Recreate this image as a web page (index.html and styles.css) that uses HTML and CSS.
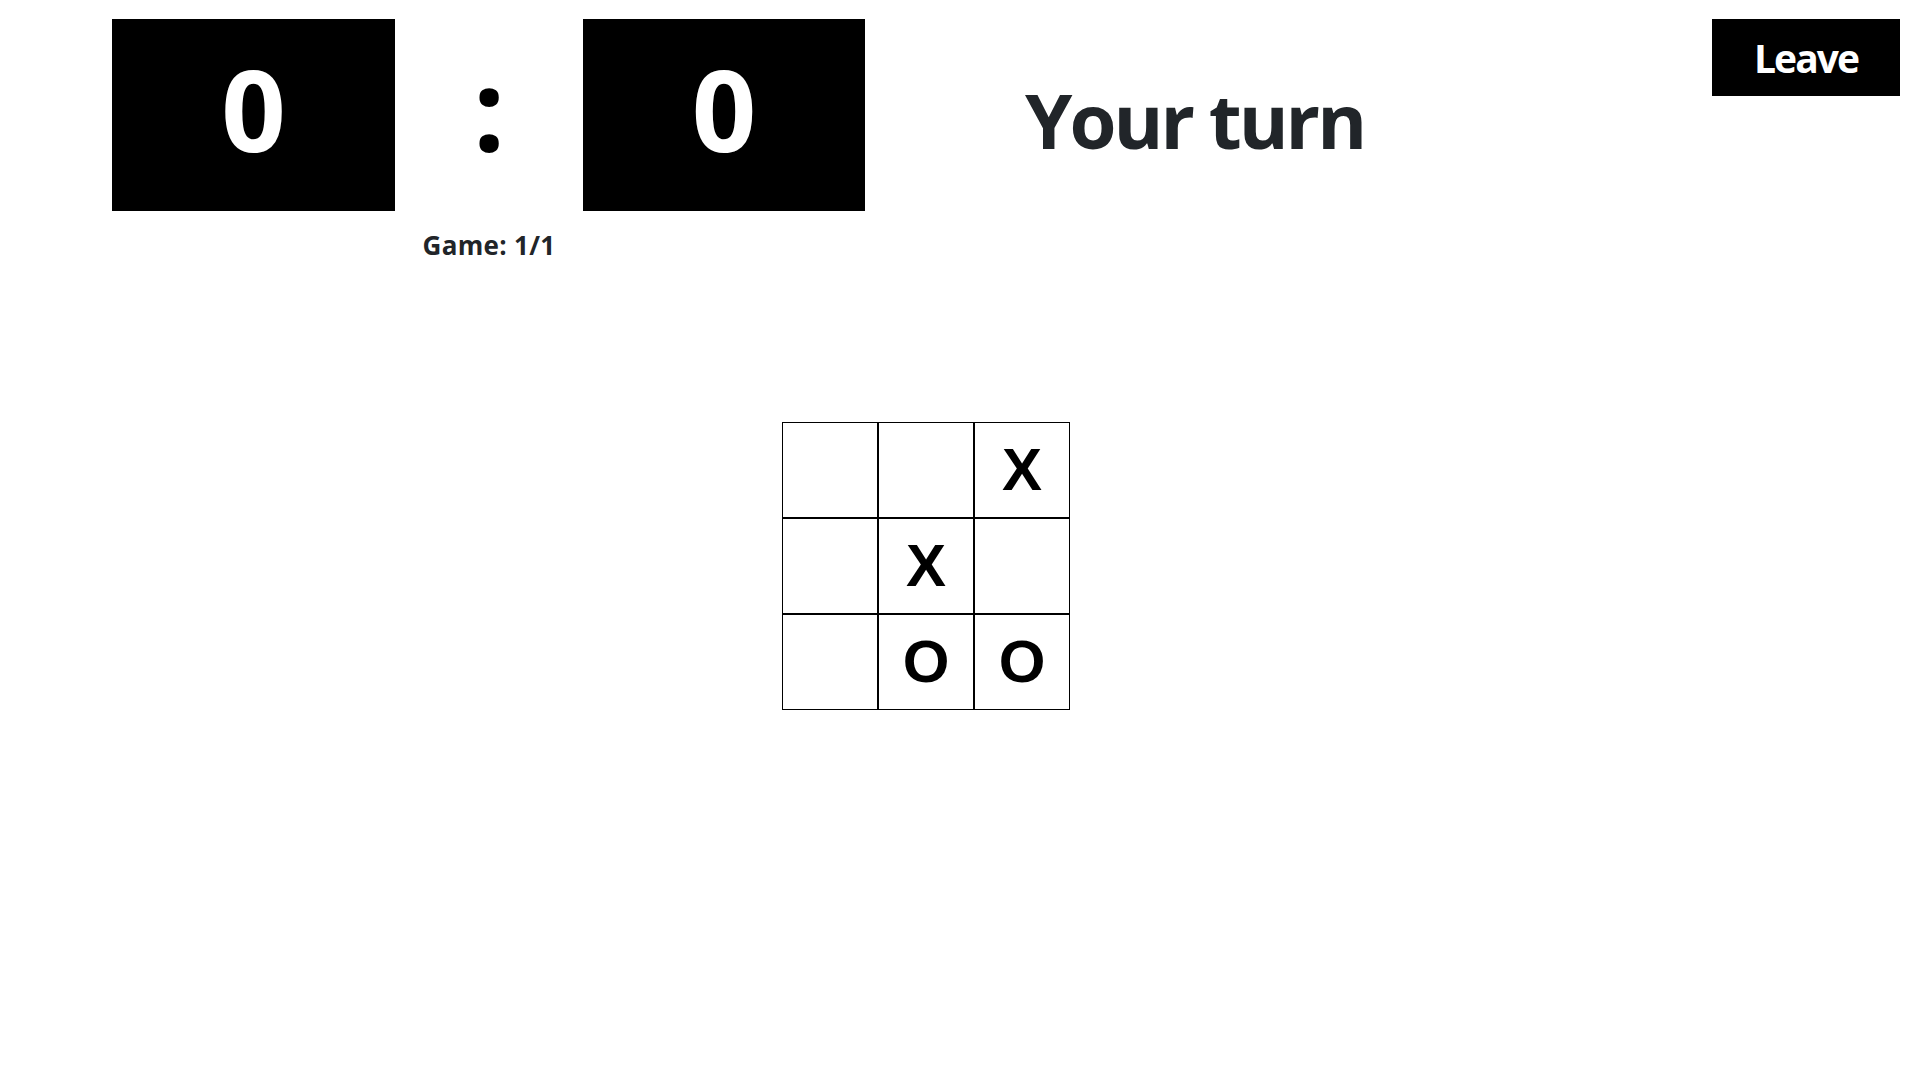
FILE: index.html
```html
<!DOCTYPE html>
<html lang="en">
<head>
<meta charset="utf-8">
<title>Tic Tac Toe</title>
<link rel="stylesheet" href="styles.css">
</head>
<body>
<header class="top">
  <div class="score">
    <div class="score-box">0</div>
    <div class="score-sep">:</div>
    <div class="score-box">0</div>
    <div class="game-count">Game: 1/1</div>
  </div>
  <h1 class="turn">Your turn</h1>
  <button class="leave" type="button">Leave</button>
</header>
<main class="board">
  <div class="cell"></div>
  <div class="cell"></div>
  <div class="cell">X</div>
  <div class="cell"></div>
  <div class="cell">X</div>
  <div class="cell"></div>
  <div class="cell"></div>
  <div class="cell">O</div>
  <div class="cell">O</div>
</main>
</body>
</html>
```
FILE: styles.css
```css
html, body {
  margin: 0;
  padding: 0;
  background: #fff;
}

body {
  font-family: "Open Sans", "Noto Sans", sans-serif;
  color: #212529;
}

.top {
  display: flex;
  align-items: flex-start;
  padding: 19px 17px 0 112px;
}

.score {
  display: grid;
  grid-template-columns: 283px 188px 282px;
  grid-template-rows: 192px auto;
}

.score-box,
.score-sep {
  display: flex;
  align-items: center;
  justify-content: center;
  font-size: 113px;
  font-weight: 700;
  line-height: 1;
  padding-bottom: 14px;
  box-sizing: border-box;
}

.score-box {
  background: #000;
  color: #fff;
}

.score-sep {
  color: #000;
}

.game-count {
  grid-column: 2;
  grid-row: 2;
  justify-self: center;
  margin-top: 19px;
  font-size: 26px;
  font-weight: 700;
  line-height: 30px;
  letter-spacing: 0.3px;
  white-space: nowrap;
}

.turn {
  margin: 63px 0 0 160px;
  font-size: 76px;
  font-weight: 700;
  line-height: 1;
  letter-spacing: -3px;
  white-space: nowrap;
}

.leave {
  margin-left: auto;
  width: 188px;
  height: 77px;
  display: flex;
  align-items: center;
  justify-content: center;
  padding: 0;
  border: none;
  background: #000;
  color: #fff;
  font-family: "Open Sans", "Noto Sans", sans-serif;
  font-size: 39px;
  font-weight: 700;
  line-height: 1;
  letter-spacing: -2px;
}

.board {
  display: grid;
  grid-template-columns: repeat(3, 96px);
  grid-template-rows: repeat(3, 96px);
  width: 288px;
  margin: 162px 0 0 782px;
}

.cell {
  border: 1px solid #000;
  display: flex;
  align-items: center;
  justify-content: center;
  font-family: "Liberation Sans", Arial, sans-serif;
  font-size: 60px;
  font-weight: 700;
  color: #000;
  line-height: 1;
}
```
